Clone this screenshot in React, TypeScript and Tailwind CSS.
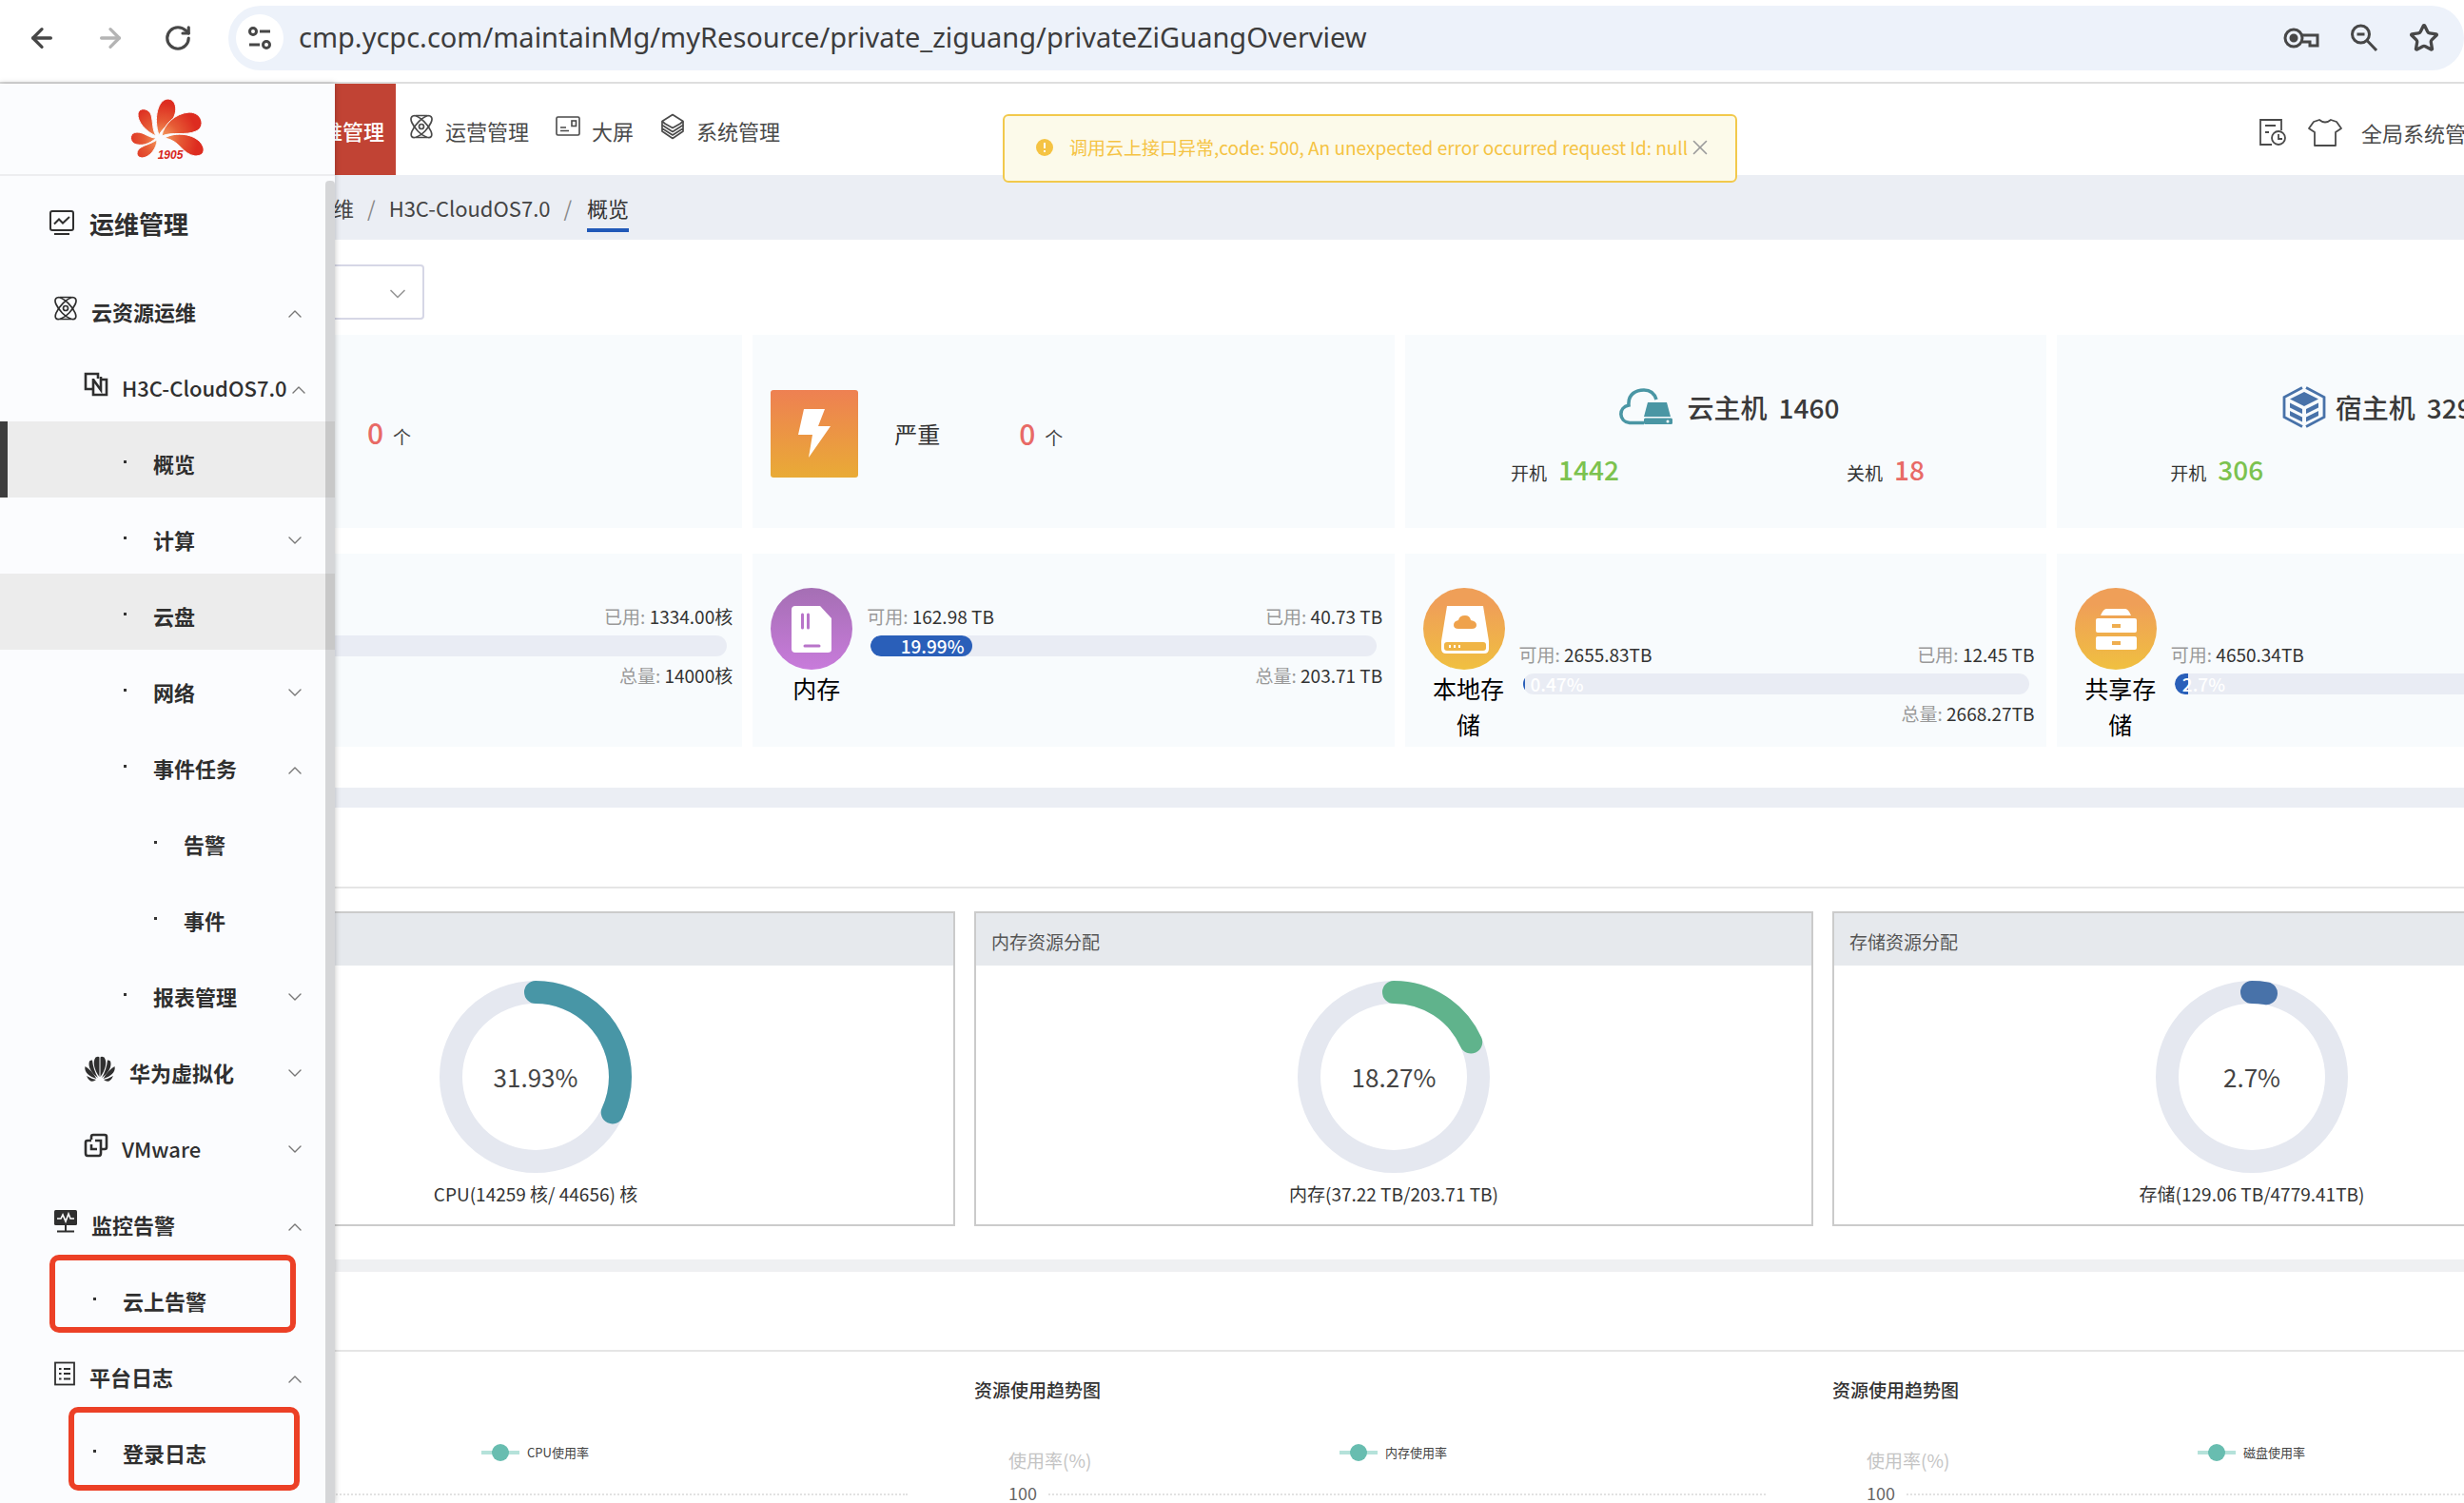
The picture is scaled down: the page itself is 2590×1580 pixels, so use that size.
import type { ReactNode } from "react"
import { ArrowLeft, ArrowRight, ChevronDown, ChevronUp, RotateCw, Star, X } from "lucide-react"

const RED = "#e86a66"
const GREEN = "#7cc24f"

function AtomIcon() {
    return (
        <svg viewBox="0 0 26 26" className="size-[26px]" fill="none" stroke="currentColor" strokeWidth="1.7">
            <path d="M6 1.500C2 1.500 1 5 3 9c3 6 9 13 15 15 5 2 7-1 5-6C20 11 12 3 6 1.500z" />
            <path d="M20 1.500c4 0 5 3.500 3 7.500-3 6-9 13-15 15-5 2-7-1-5-6C6 11 14 3 20 1.500z" />
            <path d="M7 1.500h12M7 24.500h12" />
            <circle cx="13" cy="13" r="2.500" />
        </svg>
    )
}

function ScreenIcon() {
    return (
        <svg viewBox="0 0 26 22" className="w-[26px] h-[22px]" fill="none" stroke="currentColor" strokeWidth="1.6">
            <rect x="1" y="1" width="24" height="19" rx="1.500" />
            <rect x="17" y="5" width="4.500" height="5.500" />
            <path d="M5 12h6M5 15.500h9" />
        </svg>
    )
}

function LayersIcon() {
    return (
        <svg viewBox="0 0 26 28" className="w-[26px] h-7" fill="none" stroke="currentColor" strokeWidth="1.7" strokeLinejoin="round">
            <path d="M13 1.500 24 8.500v4l-11 7-11-7v-4z" />
            <path d="M2 8.500 5 11l8 4.500L21 11l3-2.500M2 12.500v3.500l11 7 11-7v-3.500M2 16v3l11 7.500L24 19v-3" />
        </svg>
    )
}

function TrendIcon() {
    return (
        <svg viewBox="0 0 26 26" className="size-[26px]" fill="none" stroke="currentColor" strokeWidth="2">
            <rect x="1" y="1" width="24" height="20" rx="2" />
            <path d="M5 14.500l5-5 4 4 7-6.500M5 25h16" />
        </svg>
    )
}

function H3cIcon() {
    return (
        <svg viewBox="0 0 26 26" className="size-[26px]" fill="none" stroke="currentColor" strokeWidth="2.600">
            <path d="M9 18H2V2h13v5" />
            <path d="M18 8h6v16H10V7M10 8l8 11V5" />
        </svg>
    )
}

function VmwareIcon() {
    return (
        <svg viewBox="0 0 26 26" className="size-[26px]" fill="none" stroke="currentColor" strokeWidth="2.600">
            <path d="M8 7V4q0-2 2-2h12q2 0 2 2v11q0 2-2 2h-4" />
            <path d="M18 14v7q0 3-2 3H4q-2 0-2-3V10q0-2 2-2h4" />
            <path d="M8 12v5h6M12 8h6v6" />
        </svg>
    )
}

function PetalIcon() {
    return (
        <svg viewBox="0 0 34 28" className="w-[34px] h-7" fill="currentColor">
            <path d="M16.500 22C11 15 9 6 12.500 1.500q3-1.500 4 0zM17.500 22c5.500-7 7.500-16 4-20.500q-3-1.500-4 0z" />
            <path d="M15 23C8 18 4 11 6 5.500q2-1.500 3-1 1 10 6 18.500zM19 23C26 18 30 11 28 5.500q-2-1.500-3-1-1 10-6 18.500z" />
            <path d="M13.500 24C6 22 0 17 1.500 11q7 4 12 13zM20.500 24c7.500-2 13.500-7 12-13q-7 4-12 13z" />
            <path d="M13 25q-6 5-10-4 5 3 10 4zM21 25q6 5 10-4-5 3-10 4z" />
        </svg>
    )
}

function MonitorIcon() {
    return (
        <svg viewBox="0 0 26 24" className="w-[26px] h-6" fill="none">
            <rect x="1" y="0" width="24" height="16" rx="1.500" fill="currentColor" />
            <path d="M4 9h4l2-4 3 7 3-8 2 5h4" stroke="#fff" strokeWidth="1.6" />
            <path d="M13 16v6M4 22.500h18" stroke="currentColor" strokeWidth="2" />
        </svg>
    )
}

function LogIcon() {
    return (
        <svg viewBox="0 0 24 26" className="w-6 h-[26px]" fill="none" stroke="currentColor" strokeWidth="1.8">
            <rect x="2" y="1.500" width="20" height="23" />
            <path d="M6 8h2.500M11 8h7M6 13h2.500M11 13h7M6 18.500h2.500M11 18.500h7" />
        </svg>
    )
}

function Logo() {
    return (
        <svg viewBox="0 0 78 64" className="w-[78px] h-16">
            <defs>
                <radialGradient id="petal" gradientUnits="userSpaceOnUse" cx="33" cy="42" r="42">
                    <stop offset="0.1" stopColor="#f3955a" />
                    <stop offset="0.45" stopColor="#e65a35" />
                    <stop offset="0.9" stopColor="#dd2c20" />
                </radialGradient>
            </defs>
            <g fill="url(#petal)" stroke="#fbfcfe" strokeWidth="1">
                <path d="M30 38C24 20 29 1 39 0c10 0 11 14 5 22-6 7-10 9-14 16z" />
                <path d="M33 39c2-12 14-24 29-25 13 0 18 15 7 20-11 5-25 0-36 5z" />
                <path d="M36 41c12-7 31-4 38 5 6 8 3 14-6 14-14-2-15-16-32-19z" />
                <path d="M27 39C16 34 7 24 8 15c2-7 12-5 14 2 2 8 1 15 5 22z" />
                <path d="M27 41C20 48 11 50 4 47c-6-4-4-12 3-12 8 0 12 6 20 6z" />
                <path d="M28 43c0 9-8 19-16 19-7-1-6-8-1-11 5-3 11-4 17-8z" />
            </g>
            <text x="42" y="63" textAnchor="middle" fontSize="12" fontWeight="bold" fontStyle="italic" fill="#d8261c" fontFamily="Liberation Sans, sans-serif">1905</text>
        </svg>
    )
}

type MenuItem = {
    label: string
    level: number
    icon?: ReactNode
    arrow?: "up" | "down"
    state?: "active" | "hover"
    weight?: string
    mark?: string
}

const menu: MenuItem[] = [
    { label: "云资源运维", level: 0, icon: <AtomIcon />, arrow: "up" },
    { label: "H3C-CloudOS7.0", level: 1, icon: <H3cIcon />, arrow: "up", weight: "font-medium" },
    { label: "概览", level: 2, state: "active" },
    { label: "计算", level: 2, arrow: "down" },
    { label: "云盘", level: 2, state: "hover" },
    { label: "网络", level: 2, arrow: "down" },
    { label: "事件任务", level: 2, arrow: "up" },
    { label: "告警", level: 3 },
    { label: "事件", level: 3 },
    { label: "报表管理", level: 2, arrow: "down" },
    { label: "华为虚拟化", level: 1, icon: <PetalIcon />, arrow: "down" },
    { label: "VMware", level: 1, icon: <VmwareIcon />, arrow: "down", weight: "font-medium" },
    { label: "监控告警", level: 0, icon: <MonitorIcon />, arrow: "up" },
    { label: "云上告警", level: 1, mark: "left-[52px] right-[41px] -top-1 h-[82px]" },
    { label: "平台日志", level: 0, icon: <LogIcon />, arrow: "up" },
    { label: "登录日志", level: 1, mark: "left-[72px] right-[37px] -top-1 h-[88px]" },
]

const indent = ["pl-14", "pl-[88px]", "pl-[120px]", "pl-[152px]"]

function MenuRow({ item }: { item: MenuItem }) {
    const bg = item.state ? "bg-[#ececec]" : ""
    return (
        <li className={`relative h-20 ${bg}`}>
            {item.state === "active" && <span className="absolute left-0 inset-y-0 w-2 bg-[#3d3d3d]" />}
            <a href="#" className={`flex h-full items-center pt-2 pr-[30px] ${indent[item.level]}`}>
                {item.icon ? (
                    <span className="mr-3.5 mb-1.5 shrink-0">{item.icon}</span>
                ) : (
                    <span className="ml-2.5 mr-7 mb-1 size-[3px] shrink-0 bg-[#333]" />
                )}
                <span className={`whitespace-nowrap ${item.weight ?? ""}`}>{item.label}</span>
                {item.arrow && (
                    <span className="ml-auto flex w-6 shrink-0 justify-end text-[#777]">
                        {item.arrow === "up" && <ChevronUp className="mt-1.5 size-6 shrink-0" strokeWidth={1.4} />}
                        {item.arrow === "down" && <ChevronDown className="mt-0.5 size-6 shrink-0" strokeWidth={1.4} />}
                    </span>
                )}
            </a>
            {item.mark && <span className={`absolute rounded-[10px] border-[6px] border-[#ec4026] ${item.mark}`} />}
        </li>
    )
}

function Sidebar() {
    return (
        <aside className="relative z-10 w-[352px] shrink-0 bg-[#fbfcfe] shadow-[0_0_6px_rgba(0,0,0,0.25)]">
            <div className="flex h-[97px] items-center justify-center border-b-2 border-[#ededf0]">
                <Logo />
            </div>
            <nav className="text-[22px] font-semibold text-[#2f2f2f]">
                <h2 className="flex h-[98px] items-center gap-4 pl-[52px] text-[26px]">
                    <TrendIcon />
                    运维管理
                </h2>
                <ul>
                    {menu.map((item) => (
                        <MenuRow key={item.label} item={item} />
                    ))}
                </ul>
            </nav>
            <div className="absolute right-0 top-[102px] bottom-0 w-2.5 rounded-t bg-black/15" />
        </aside>
    )
}

function BrowserBar() {
    return (
        <div className="flex h-[88px] shrink-0 items-center border-b-2 border-[#dedede] bg-white pb-1.5 text-[#474747]">
            <button aria-label="back" className="ml-7"><ArrowLeft className="size-8" strokeWidth={2.5} /></button>
            <button aria-label="forward" className="ml-10 text-[#b4b4b4]"><ArrowRight className="size-8" strokeWidth={2.5} /></button>
            <button aria-label="reload" className="ml-10"><RotateCw className="size-[30px]" strokeWidth={2.5} /></button>
            <div className="ml-[38px] flex h-[68px] flex-1 items-center rounded-full bg-[#edf2fa] pl-2 pr-[26px]">
                <button aria-label="site information" className="flex size-[50px] items-center justify-center rounded-full bg-white">
                    <svg viewBox="0 0 26 26" className="size-[26px]" fill="none" stroke="currentColor" strokeWidth="3">
                        <circle cx="6" cy="6" r="3.500" />
                        <circle cx="20" cy="20" r="3.500" />
                        <path d="M13 6h11M2 20h11" />
                    </svg>
                </button>
                <input
                    aria-label="address"
                    readOnly
                    value="cmp.ycpc.com/maintainMg/myResource/private_ziguang/privateZiGuangOverview"
                    className="ml-4 flex-1 bg-transparent pb-0.5 font-['Noto_Sans',sans-serif] text-[29px] text-[#3c3c3c] outline-none"
                />
                <div className="flex items-center gap-8">
                    <button aria-label="passwords">
                        <svg viewBox="0 0 38 24" className="w-[38px] h-6" fill="none" stroke="currentColor" strokeWidth="3">
                            <circle cx="11" cy="12" r="9" />
                            <circle cx="11" cy="12" r="3" fill="currentColor" />
                            <path d="M20 9h16v11h-8v-4h-8" />
                        </svg>
                    </button>
                    <button aria-label="zoom">
                        <svg viewBox="0 0 30 30" className="size-[30px]" fill="none" stroke="currentColor" strokeWidth="3">
                            <circle cx="11.500" cy="11" r="9" />
                            <path d="M18 17.500 28 28M7.500 11h8" />
                        </svg>
                    </button>
                    <button aria-label="bookmark"><Star className="size-8" strokeWidth={2.5} /></button>
                </div>
            </div>
        </div>
    )
}

function TopNav() {
    return (
        <header className="flex h-24 items-center text-[22px] text-[#4a4a4a]">
            <a href="#" className="flex h-24 w-16 items-center justify-end overflow-hidden bg-[#c14334] pr-3 pt-0.5 font-medium whitespace-nowrap text-white">
                维管理
            </a>
            <nav className="flex items-center pb-1.5">
                <a href="#" className="ml-3.5 flex items-center gap-3"><AtomIcon /><span className="pt-2">运营管理</span></a>
                <a href="#" className="ml-7 flex items-center gap-3"><ScreenIcon /><span className="pt-2">大屏</span></a>
                <a href="#" className="ml-7 flex items-center gap-3"><LayersIcon /><span className="pt-2">系统管理</span></a>
            </nav>
            <div className="ml-auto flex w-[216px] items-center overflow-hidden pt-1.5 whitespace-nowrap">
                <button aria-label="记录" className="shrink-0">
                    <svg viewBox="0 0 30 30" className="size-[30px]" fill="none" stroke="currentColor" strokeWidth="1.8">
                        <path d="M14 28H2V2h22v11M7 8h11M7 15h4" />
                        <circle cx="21" cy="21" r="7" />
                        <path d="M21 17v5h4" />
                    </svg>
                </button>
                <button aria-label="主题" className="ml-[22px] shrink-0">
                    <svg viewBox="0 0 36 30" className="w-9 h-[30px]" fill="none" stroke="currentColor" strokeWidth="1.8" strokeLinejoin="round">
                        <path d="M12 2q6 5 12 0l6 2 5 7-6 4v14H7V15l-6-4 5-7z" />
                    </svg>
                </button>
                <span className="ml-5">全局系统管</span>
            </div>
        </header>
    )
}

function Toast() {
    return (
        <div role="alert" className="absolute left-[1054px] top-[120px] z-20 flex h-[72px] w-[772px] items-center rounded-md border-2 border-[#f2c94c] bg-[#fcfaea] pb-0.5 pl-8 text-[19px] text-[#f5c343]">
            <svg viewBox="0 0 20 20" className="size-5">
                <circle cx="10" cy="10" r="9" fill="#f5c343" />
                <path d="M10 5v6M10 13v2" stroke="#fff" strokeWidth="2" />
            </svg>
            <span className="ml-4 whitespace-nowrap">调用云上接口异常,code: 500, An unexpected error occurred request Id: null</span>
            <button aria-label="close" className="text-[#9a9a9a]"><X className="size-[26px]" strokeWidth={1.5} /></button>
        </div>
    )
}

function Breadcrumb() {
    return (
        <nav className="flex h-[68px] items-center gap-3.5 overflow-hidden bg-[#ebeef4] text-[22px] whitespace-nowrap text-[#444]">
            <a href="#" className="flex w-5 justify-end">维</a>
            <span className="text-[#888]">/</span>
            <a href="#">H3C-CloudOS7.0</a>
            <span className="text-[#888]">/</span>
            <a href="#" className="ml-0.5 border-b-4 border-[#2159b8] pt-1 leading-[44px] text-[#333]">概览</a>
        </nav>
    )
}

function AlarmCount() {
    return (
        <p className="flex items-baseline gap-2.5">
            <span className="text-[30px] font-medium text-[#e86a66]">0</span>
            <span className="text-[19px] text-[#444]">个</span>
        </p>
    )
}

function HostCard({ icon, name, total, on, off }: { icon: ReactNode; name: string; total: number; on: number; off?: number }) {
    return (
        <div className="h-[203px] overflow-hidden bg-[#f8fbfd]">
            <div className="w-[674px] pt-12">
                <div className="flex h-14 items-center justify-center text-[28px] font-medium text-[#3a3a3a]">
                    {icon}
                    <span className="ml-2.5">{name}</span>
                    <span className="ml-3">{total}</span>
                </div>
                <div className="mt-4 grid grid-cols-2">
                    {[["开机", on, GREEN], ["关机", off, RED]].map(([label, value, color]) => (
                        value !== undefined && <p key={label} className="flex items-baseline justify-center gap-3 text-[19px] text-[#333]">
                            {label}
                            <span className="text-[28px] font-medium" style={{ color: String(color) }}>{value}</span>
                        </p>
                    ))}
                </div>
            </div>
        </div>
    )
}

type UsageProps = { free?: string; used?: string; total?: string; percent?: number; low?: boolean }

function Usage({ free, used, total, percent = 0, low }: UsageProps) {
    const wide = percent > 10
    return (
        <div className={`flex-1 text-[19px] leading-8 text-[#333] ${low ? "pt-[90px]" : "pt-[50px]"}`}>
            <div className="flex justify-between">
                <p>{free && <><span className="text-[#999]">可用: </span>{free}</>}</p>
                {used && <p><span className="text-[#999]">已用: </span>{used}</p>}
            </div>
            <div className={`relative mr-1.5 mt-1 flex h-[22px] overflow-hidden bg-[#e9ecf4] ${free ? "ml-1 rounded-full" : "rounded-r-full"}`}>
                {percent > 0 && (
                    <>
                        <div className={`bg-[#2a5fb9] ${wide ? "rounded-full" : "rounded-l-full"}`} style={{ width: `${percent}%` }} />
                        <div className="absolute inset-y-0 left-0 flex items-center font-medium text-white" style={{ width: `${percent}%` }}>
                            <span className={wide ? "ml-auto pr-2" : "pl-2"}>{percent}%</span>
                        </div>
                    </>
                )}
            </div>
            {total && <p className="mt-1 text-right"><span className="text-[#999]">总量: </span>{total}</p>}
        </div>
    )
}

function ResourceCard({ icon, name, ...usage }: UsageProps & { icon: ReactNode; name: string }) {
    return (
        <div className="h-[203px] overflow-hidden bg-[#f8fbfd]">
            <div className="flex w-[674px] pl-[19px] pr-3">
                <div className="w-[86px] shrink-0 pt-9">
                    {icon}
                    <p className="ml-2 w-20 text-center text-[25px] leading-[38px] text-black">{name}</p>
                </div>
                <div className="ml-[15px] flex flex-1">
                    <Usage {...usage} />
                </div>
            </div>
        </div>
    )
}

function CloudHostIcon() {
    return (
        <svg viewBox="0 0 56 40" className="ml-2 mr-1.5 w-14 h-10" fill="none">
            <path d="M26 36.500H11C-1 35-1 20 10 18 9 6 18 2 26 2q10 0 13 10" stroke="#4a96a4" strokeWidth="3.600" />
            <path d="M30 15h20l4 15H26z" fill="#4a96a4" />
            <rect x="26" y="31.500" width="30" height="6.500" rx="1.500" fill="#4a96a4" />
            <circle cx="51" cy="35" r="1.500" fill="#fff" />
        </svg>
    )
}

function HostIcon() {
    return (
        <svg viewBox="0 0 46 44" className="w-[46px] h-11" fill="none">
            <path d="M21 1.500 2 11.500v21l19 10M25 1.500l19 10v21l-19 10" stroke="#4872a9" strokeWidth="2.800" />
            <path d="M23 6 38 13.500 23 21 8 13.500z" fill="#4872a9" />
            <path d="M8 17.500l13 6.500v5L8 22.500zM38 17.500 25 24v5l13-6.500zM8 26l13 6.500v5L8 31zM38 26l-13 6.500v5L38 31z" fill="#4872a9" />
        </svg>
    )
}

function MemoryIcon() {
    return (
        <svg viewBox="0 0 86 86" className="size-[86px]">
            <defs>
                <linearGradient id="mem" x2="0" y2="1">
                    <stop stopColor="#a56fb4" />
                    <stop offset="1" stopColor="#c87bdb" />
                </linearGradient>
            </defs>
            <circle cx="43" cy="43" r="43" fill="url(#mem)" />
            <path d="M26 19h26l12 13v33q0 3-4 3H26q-4 0-4-4V23q0-4 4-4z" fill="#fff" />
            <path d="M33.500 28v14M39.500 28v14M36 61h15" stroke="#b874c9" strokeWidth="3" strokeLinecap="round" />
        </svg>
    )
}

function OrangeCircle({ children }: { children: ReactNode }) {
    return (
        <svg viewBox="0 0 86 86" className="size-[86px]">
            <defs>
                <linearGradient id="orange" x2="0" y2="1">
                    <stop offset="0.2" stopColor="#ef9f58" />
                    <stop offset="1" stopColor="#f0c040" />
                </linearGradient>
            </defs>
            <circle cx="43" cy="43" r="43" fill="url(#orange)" />
            {children}
        </svg>
    )
}

function DiskGlyph() {
    return (
        <>
            <path d="M25 19h38l6 37v8q0 5-5 5H24q-5 0-5-5v-8z" fill="#fff" />
            <path d="M37 43q-5 0-5-4t5-5q1-5 7-5 5 0 6 5 6 1 6 5t-5 4z" fill="#efa24c" />
            <rect x="22" y="57" width="44" height="9" rx="3" fill="#f0b545" />
            <path d="M27 61.500h2M32 61.500h2M37 61.500h2" stroke="#fff" strokeWidth="3" />
        </>
    )
}

function CabinetGlyph() {
    return (
        <>
            <path d="M33 22h20q3 0 6 7H27q3-7 6-7z" fill="#fff" />
            <rect x="22" y="32" width="43" height="15" rx="2" fill="#fff" />
            <rect x="22" y="51" width="43" height="14" rx="2" fill="#fff" />
            <path d="M39 40h9M39 58h9" stroke="#efae50" strokeWidth="4" />
        </>
    )
}

function SummaryCards() {
    return (
        <section className="grid grid-cols-[428fr_674fr_674fr_428fr] gap-x-[11px] gap-y-[27px] pt-4 pb-[43px]">
            <div className="flex h-[203px] items-center bg-[#f8fbfd] pt-0.5 pl-[34px]">
                <AlarmCount />
            </div>
            <div className="flex h-[203px] items-center bg-[#f8fbfd] pt-1 pl-[19px]">
                <svg viewBox="0 0 92 92" className="size-[92px]">
                    <defs>
                        <linearGradient id="bolt" x2="0" y2="1">
                            <stop stopColor="#ee8052" />
                            <stop offset="1" stopColor="#e9ab36" />
                        </linearGradient>
                    </defs>
                    <rect width="92" height="92" rx="3" fill="url(#bolt)" />
                    <path d="M35 20h22l-7 18h13L40 71l4-24H29z" fill="#fff" />
                </svg>
                <p className="ml-[38px] w-[131px] text-2xl text-[#333]">严重</p>
                <AlarmCount />
            </div>
            <HostCard icon={<CloudHostIcon />} name="云主机" total={1460} on={1442} off={18} />
            <HostCard icon={<HostIcon />} name="宿主机" total={329} on={306} />
            <div className="flex h-[203px] bg-[#f8fbfd] pr-2.5">
                <Usage used="1334.00核" total="14000核" />
            </div>
            <ResourceCard icon={<MemoryIcon />} name="内存" free="162.98 TB" used="40.73 TB" total="203.71 TB" percent={19.99} />
            <ResourceCard icon={<OrangeCircle><DiskGlyph /></OrangeCircle>} name="本地存储" free="2655.83TB" used="12.45 TB" total="2668.27TB" percent={0.47} low />
            <ResourceCard icon={<OrangeCircle><CabinetGlyph /></OrangeCircle>} name="共享存储" free="4650.34TB" percent={2.7} low />
        </section>
    )
}

const allocations = [
    { title: "", percent: 31.93, color: "#4896a6", caption: "CPU(14259 核/ 44656) 核", side: "items-end" },
    { title: "内存资源分配", percent: 18.27, color: "#60b38c", caption: "内存(37.22 TB/203.71 TB)", side: "items-start" },
    { title: "存储资源分配", percent: 2.7, color: "#4872a9", caption: "存储(129.06 TB/4779.41TB)", side: "items-start" },
]

function Donut({ percent, color }: { percent: number; color: string }) {
    return (
        <svg viewBox="0 0 202 202" className="size-[202px]" fill="none" strokeWidth="24">
            <circle cx="101" cy="101" r="89" stroke="#e5e8f0" />
            <circle cx="101" cy="101" r="89" stroke={color} strokeLinecap="round" pathLength="100" strokeDasharray={`${percent} 100`} transform="rotate(-90 101 101)" />
            <text x="101" y="112" textAnchor="middle" fontSize="26" fill="#444">{percent}%</text>
        </svg>
    )
}

function Allocations() {
    return (
        <section className="grid grid-cols-[652fr_882fr_664fr] gap-5 pt-6 pb-[35px]">
            {allocations.map((a) => (
                <div key={a.caption} className={`flex h-[331px] flex-col overflow-hidden ${a.side}`}>
                    <div className="flex h-full w-[882px] flex-col border-2 border-[#cbcbcb]">
                        <h3 className="h-[55px] shrink-0 bg-[#e6e9ed] pl-4 pt-0.5 text-[19px] leading-[56px] text-[#555]">{a.title}</h3>
                        <div className="flex flex-col items-center pt-4">
                            <Donut percent={a.percent} color={a.color} />
                            <p className="mt-1.5 text-[19px] leading-8 text-[#333]">{a.caption}</p>
                        </div>
                    </div>
                </div>
            ))}
        </section>
    )
}

const trends = [
    { name: "CPU使用率", side: "items-end", labelled: false },
    { name: "内存使用率", side: "items-start", labelled: true },
    { name: "磁盘使用率", side: "items-start", labelled: true },
]

function Trends() {
    return (
        <section className="grid grid-cols-[652fr_882fr_664fr] gap-5 pt-6">
            {trends.map((t) => (
                <div key={t.name} className={`flex flex-col overflow-hidden ${t.side}`}>
                    <div className="w-[882px] whitespace-nowrap">
                        <h3 className="h-8 text-[19px] leading-8 font-medium text-[#333]">{t.labelled && "资源使用趋势图"}</h3>
                        <div className="mt-9 grid grid-cols-[384px_1fr]">
                            <span className="h-9 pl-9 pt-2 text-[19px] leading-7 text-[#c4c4c4]">{t.labelled && "使用率(%)"}</span>
                            <span className="flex h-7 items-center gap-2 text-[13px] text-[#444]">
                                <svg viewBox="0 0 40 20" className="w-10 h-5">
                                    <path d="M0 10h40" stroke="#b5e2da" strokeWidth="4" />
                                    <circle cx="20" cy="10" r="9" fill="#68bdb0" />
                                </svg>
                                {t.name}
                            </span>
                        </div>
                        <div className="mt-1 flex h-8 items-center pl-9 pr-[50px] text-[18px] leading-8 text-[#666]">
                            {t.labelled && "100"}
                            <span className="ml-3 mt-1 flex-1 border-t-2 border-dotted border-[#e2e2e2]" />
                        </div>
                    </div>
                </div>
            ))}
        </section>
    )
}

export default function App() {
    return (
        <div className="relative flex h-screen flex-col overflow-hidden bg-white font-['Noto_Sans_CJK_SC',sans-serif]">
            <BrowserBar />
            <Toast />
            <div className="flex min-h-0 flex-1">
                <Sidebar />
                <main className="min-w-0 flex-1 overflow-hidden">
                    <TopNav />
                    <Breadcrumb />
                    <div className="pt-[26px]">
                        <button aria-label="选择" className="flex h-[58px] w-[94px] items-center justify-end rounded-r border-2 border-l-0 border-[#d6d7e6] pt-1 pr-3 text-[#999]">
                            <ChevronDown className="size-7" strokeWidth={1.5} />
                        </button>
                    </div>
                    <SummaryCards />
                    <div className="h-[21px] bg-[#ebeef4]" />
                    <div className="h-[85px] border-b-2 border-[#e5e5e5]" />
                    <Allocations />
                    <div className="h-[13px] bg-[#eff0f2]" />
                    <div className="h-[84px] border-b-2 border-[#e5e5e5]" />
                    <Trends />
                </main>
            </div>
        </div>
    )
}
